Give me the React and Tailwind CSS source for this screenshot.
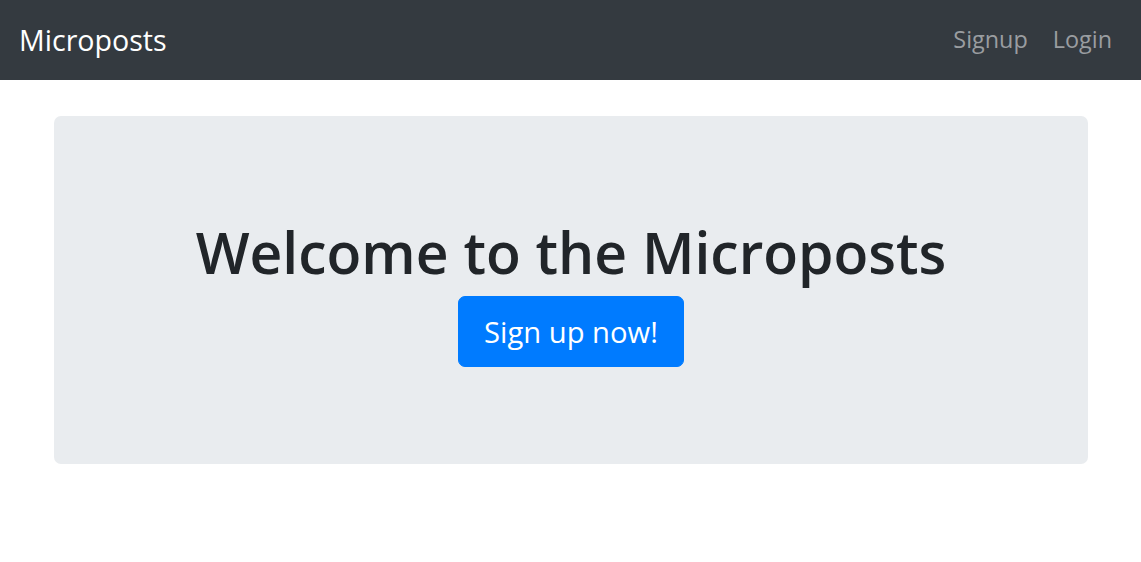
export default function App() {
  return (
    <div className="min-h-[562px] bg-white" style={{ fontFamily: '"Open Sans", "Noto Sans", sans-serif' }}>
      <nav className="flex h-[80px] items-center justify-between bg-[#343a40] pl-[19px] pr-[29px]">
        <a className="text-[28.6px] leading-none text-white">Microposts</a>
        <div className="flex items-center gap-[25px] text-[23.4px] leading-none text-[#9a9da0]">
          <a>Signup</a>
          <a>Login</a>
        </div>
      </nav>
      <div className="pl-[54px] pr-[53px] pt-[36px]">
        <div className="flex flex-col items-center rounded-[7px] bg-[#e9ecef] pt-[96px] pb-[97px]">
          <h1 className="mb-[8px] pt-[4px] text-[57px] font-semibold leading-[72px] text-[#212529]">Welcome to the Microposts</h1>
          <button className="rounded-[7px] border border-[#007bff] bg-[#007bff] px-[25px] pt-[13px] pb-[11px] text-[29.2px] leading-[45px] text-white">
            Sign up now!
          </button>
        </div>
      </div>
    </div>
  );
}
